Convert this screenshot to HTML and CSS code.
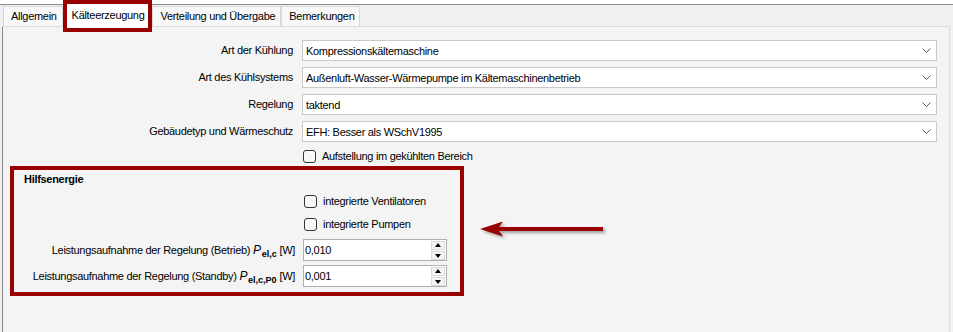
FILE: index.html
```html
<!DOCTYPE html>
<html lang="de">
<head>
    <meta charset="UTF-8">
    <title>Kälteerzeugung</title>
    <link rel="stylesheet" href="styles.css">
</head>
<body>

<div class="topline"></div>

<!-- Reiter -->
<div class="tabstrip">
    <div class="tab">Allgemein</div>
    <div class="tab tab-active">Kälteerzeugung</div>
    <div class="tab">Verteilung und Übergabe</div>
    <div class="tab">Bemerkungen</div>
</div>

<div class="panel">
    <!-- Auswahlfelder -->
    <div class="form">
        <div class="lbl">Art der Kühlung</div>
        <div class="combo"><span>Kompressionskältemaschine</span><svg class="chev" width="9" height="5" viewBox="0 0 9 5"><polyline points="0.5,0.5 4.5,4.5 8.5,0.5"/></svg></div>

        <div class="lbl">Art des Kühlsystems</div>
        <div class="combo"><span>Außenluft-Wasser-Wärmepumpe im Kältemaschinenbetrieb</span><svg class="chev" width="9" height="5" viewBox="0 0 9 5"><polyline points="0.5,0.5 4.5,4.5 8.5,0.5"/></svg></div>

        <div class="lbl">Regelung</div>
        <div class="combo"><span>taktend</span><svg class="chev" width="9" height="5" viewBox="0 0 9 5"><polyline points="0.5,0.5 4.5,4.5 8.5,0.5"/></svg></div>

        <div class="lbl">Gebäudetyp und Wärmeschutz</div>
        <div class="combo"><span>EFH: Besser als WSchV1995</span><svg class="chev" width="9" height="5" viewBox="0 0 9 5"><polyline points="0.5,0.5 4.5,4.5 8.5,0.5"/></svg></div>

        <div></div>
        <label class="check"><span class="box"></span>Aufstellung im gekühlten Bereich</label>
    </div>

    <!-- Hilfsenergie (rot markiert) -->
    <div class="group">
        <div class="group-title">Hilfsenergie</div>
        <div class="group-form">
            <div></div>
            <label class="check"><span class="box"></span>integrierte Ventilatoren</label>

            <div></div>
            <label class="check"><span class="box"></span>integrierte Pumpen</label>

            <div class="lbl lbl-spin">Leistungsaufnahme der Regelung (Betrieb) <i>P</i><sub>el,c</sub> [W]</div>
            <div class="spin">
                <span>0,010</span>
                <div class="spin-btns"><span class="btn-up"></span><span class="btn-down"></span></div>
            </div>

            <div class="lbl lbl-spin">Leistungsaufnahme der Regelung (Standby) <i>P</i><sub>el,c,P0</sub> [W]</div>
            <div class="spin">
                <span>0,001</span>
                <div class="spin-btns"><span class="btn-up"></span><span class="btn-down"></span></div>
            </div>
        </div>
    </div>

    <!-- Pfeil -->
    <svg class="arrow" width="134" height="30" viewBox="0 0 134 30">
        <polygon points="4,15 27,7.5 23,13 127,13 127,17 23,17 27,22.5"/>
    </svg>
</div>

</body>
</html>
```

FILE: styles.css
```css
/* allgemein */
body {
    margin: 0;
    width: 953px;
    height: 332px;
    overflow: hidden;
    background-color: #f0f0f0;
    font-family: "Liberation Sans", Arial, sans-serif;
    font-size: 11px;
    letter-spacing: -0.3px;
    color: #000;
}

.topline {
    height: 4px;
    background-color: #fff;
    border-bottom: 1px solid #8a8a8a;
}

/* Reiter */
.tabstrip {
    display: flex;
    align-items: flex-end;
    height: 21px;
    padding-left: 3px;
}

.tab {
    height: 19px;
    line-height: 19px;
    padding: 0 5px 0 7px;
    background-color: #f8f8f8;
    border: 1px solid #d9d9d9;
    border-bottom: none;
}

.tab-active {
    position: relative;
    z-index: 2;
    height: 24px;
    line-height: 22px;
    margin: 0 4px -2px 4px;
    padding: 0 4px 0 5px;
    background-color: #fff;
    border: none;
    outline: 4px solid #990000;
}

/* Inhalt */
.panel {
    position: relative;
    height: 320px;
    margin-left: 2px;
    width: 948px;
    padding-top: 13px;
    box-sizing: border-box;
    background-color: #f4f4f4;
    border: 1px solid #dcdcdc;
    border-left: 1px solid #8a8a8a;
}

.form {
    display: grid;
    grid-template-columns: 290px 635px;
    column-gap: 9px;
    row-gap: 6px;
}

.lbl {
    text-align: right;
    line-height: 21px;
    white-space: nowrap;
}

.combo {
    display: flex;
    align-items: center;
    justify-content: space-between;
    height: 21px;
    box-sizing: border-box;
    padding: 0 5px 0 3px;
    background-color: #fff;
    border: 1px solid #c9c9c9;
}

.chev polyline {
    fill: none;
    stroke: #5a5a5a;
    stroke-width: 1;
}

.check {
    display: flex;
    align-items: center;
    height: 16px;
    padding-left: 1px;
}

.box {
    width: 11px;
    height: 11px;
    margin-right: 6px;
    border: 1px solid #333;
    border-radius: 3px;
    background-color: #f8f8f8;
}

/* Gruppe Hilfsenergie */
.group {
    width: 454px;
    height: 130px;
    box-sizing: border-box;
    margin: 2px 0 0 7px;
    border: 4px solid #990000;
}

.group-title {
    height: 18px;
    line-height: 18px;
    padding-left: 10px;
    font-weight: bold;
}

.group-form {
    display: grid;
    grid-template-columns: 281px 144px;
    grid-template-rows: 23px 23px 26px 22px;
    column-gap: 8px;
    margin-top: 5px;
}

.lbl-spin {
    line-height: 22px;
    height: 22px;
}

.lbl-spin i {
    font-size: 12px;
    margin-right: 1px;
}

.lbl-spin sub {
    font-size: 9px;
    font-weight: bold;
    line-height: 0;
    letter-spacing: 0;
}

.spin {
    display: flex;
    align-items: center;
    justify-content: space-between;
    height: 22px;
    box-sizing: border-box;
    padding-left: 1px;
    background-color: #fff;
    border: 1px solid #b0b0b0;
}

.spin-btns {
    display: flex;
    flex-direction: column;
    gap: 1px;
    margin-right: 1px;
}

.spin-btns span {
    position: relative;
    width: 12px;
    height: 7px;
    background-color: #f4f4f4;
    border: 1px solid #dadada;
}

.spin-btns span::after {
    content: "";
    position: absolute;
    left: 3px;
    border-left: 3px solid transparent;
    border-right: 3px solid transparent;
}

.btn-up::after {
    top: 1px;
    border-bottom: 4px solid #000;
}

.btn-down::after {
    top: 2px;
    border-top: 4px solid #000;
}

/* Pfeil über dem Inhalt */
.arrow {
    position: absolute;
    left: 473px;
    top: 187px;
    filter: drop-shadow(2px 2px 1.5px rgba(0, 0, 0, 0.35));
}

.arrow polygon {
    fill: #990000;
}
```
